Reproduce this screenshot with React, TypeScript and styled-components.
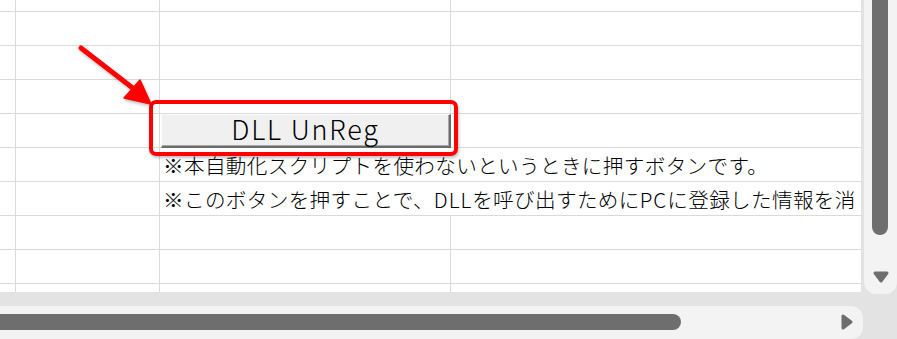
import styled, { createGlobalStyle } from 'styled-components';

const GlobalStyle = createGlobalStyle`
  html, body {
    margin: 0;
    padding: 0;
    background: #e3e3e3;
    overflow: hidden;
  }
`

const Window = styled.div`
  width: 897px;
  height: 339px;
  display: flex;
  flex-direction: column;
  background: #e3e3e3;
  font-family: "Noto Sans CJK JP", "Noto Sans", sans-serif;
`

const TopArea = styled.div`
  display: flex;
  height: 294px;
`

const Sheet = styled.div`
  position: relative;
  width: 861px;
  height: 292px;
  display: grid;
  grid-template-columns: 15px 143px 290px 410px;
  grid-template-rows: 11px repeat(8, 33px) 8px;
  gap: 1px;
  background: #dadada;
  overflow: hidden;
`

const Cell = styled.div`
  background: #fff;
`

const TextCell = styled.div<{ row: number }>`
  grid-column: 3 / 5;
  grid-row: ${p => p.row};
  background: #fff;
  padding-left: 3px;
  font-size: 20.6px;
  font-weight: 300;
  letter-spacing: 0.35px;
  line-height: 35px;
  color: #000;
  white-space: nowrap;
  overflow: hidden;
`

const Latin = styled.span`
  letter-spacing: 1px;
`

const ButtonCell = styled.div`
  grid-column: 3;
  grid-row: 5;
  background: #fff;
  display: flex;
  overflow: visible;
`

const SheetButton = styled.button`
  flex: 1;
  margin: 0 -1px -1px 1px;
  padding: 0 0 5px 0;
  background: #f0f0f0;
  border: none;
  border-top: 1px solid #fbfbfb;
  border-left: 1px solid #fbfbfb;
  border-right: 2px solid #6b6b6b;
  border-bottom: 2px solid #6b6b6b;
  box-shadow: inset -1px -1px 0 #a8a8a8;
  font-family: "Noto Sans CJK JP", "Noto Sans", sans-serif;
  font-size: 27px;
  font-weight: 300;
  letter-spacing: 1.8px;
  line-height: 28px;
  color: #000;
`

const Highlight = styled.div`
  position: absolute;
  left: 149px;
  top: 100px;
  width: 309px;
  height: 56px;
  box-sizing: border-box;
  border: 4px solid #ff0000;
  border-radius: 7px;
  box-shadow: 1px 2px 3px rgba(0, 0, 0, 0.25);
  pointer-events: none;
`

const Arrow = styled.svg`
  position: absolute;
  left: 0;
  top: 0;
  pointer-events: none;
  filter: drop-shadow(1px 2px 1.5px rgba(0, 0, 0, 0.25));
`

const VScroll = styled.div`
  margin-left: 3px;
  flex: 1;
  background: #f3f3f3;
  border-radius: 0 0 12px 12px;
  display: flex;
  flex-direction: column;
  align-items: center;
`

const VThumb = styled.div`
  width: 16px;
  height: 235px;
  margin-left: -1px;
  background: #6e6e6e;
  border-radius: 0 0 8px 8px;
`

const ArrowIcon = styled.svg<{ mt?: number }>`
  display: block;
  flex: none;
  margin-top: ${p => p.mt ?? 0}px;
`

const HScrollRow = styled.div`
  margin-top: 12px;
  display: flex;
  height: 33px;
`

const HScroll = styled.div`
  width: 863px;
  background: #f3f3f3;
  border-radius: 0 12px 12px 0;
  display: flex;
  align-items: center;
`

const HThumb = styled.div`
  width: 681px;
  height: 16px;
  margin-top: -1px;
  background: #6e6e6e;
  border-radius: 0 8px 8px 0;
`

const Spacer = styled.div`
  flex: 1;
`

const rows = 10;
const cols = 4;

export default function App() {
  const cells = [];
  for (let r = 1; r <= rows; r++) {
    for (let c = 1; c <= cols; c++) {
      if (r === 5 && c === 3) continue;
      if ((r === 6 || r === 7) && (c === 3 || c === 4)) continue;
      cells.push(<Cell key={`${r}-${c}`} style={{ gridRow: r, gridColumn: c }} />);
    }
  }

  return (
    <Window>
      <GlobalStyle />
      <TopArea>
        <Sheet>
          {cells}
          <ButtonCell>
            <SheetButton>DLL UnReg</SheetButton>
          </ButtonCell>
          <TextCell row={6}>※本自動化スクリプトを使わないというときに押すボタンです。</TextCell>
          <TextCell row={7}>
            ※このボタンを押すことで、<Latin>DLL</Latin>を呼び出すために<Latin>PC</Latin>に登録した情報を消
          </TextCell>
          <Highlight />
          <Arrow width="170" height="120" viewBox="0 0 170 120">
            <line x1="81" y1="48" x2="134" y2="89" stroke="#ff0000" strokeWidth="5" strokeLinecap="round" />
            <polygon points="151,104 124,98 140,80" fill="#ff0000" stroke="#ff0000" strokeWidth="1.5" strokeLinejoin="round" />
          </Arrow>
        </Sheet>
        <VScroll>
          <VThumb />
          <ArrowIcon mt={35} width="18" height="14" viewBox="0 0 18 14">
            <path d="M3 3 L15 3 L9 11 Z" fill="#6e6e6e" stroke="#6e6e6e" strokeWidth="3" strokeLinejoin="round" />
          </ArrowIcon>
        </VScroll>
      </TopArea>
      <HScrollRow>
        <HScroll>
          <HThumb />
          <Spacer />
          <ArrowIcon width="14" height="18" viewBox="0 0 14 18" style={{ marginRight: 9, marginTop: -1 }}>
            <path d="M3 3 L3 15 L11 9 Z" fill="#6e6e6e" stroke="#6e6e6e" strokeWidth="3" strokeLinejoin="round" />
          </ArrowIcon>
        </HScroll>
      </HScrollRow>
    </Window>
  );
}
